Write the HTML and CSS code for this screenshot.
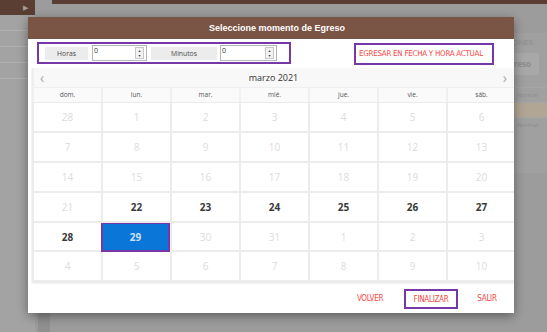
FILE: index.html
```html
<!DOCTYPE html>
<html lang="es">
<head>
  <meta charset="UTF-8">
  <title>Seleccione momento de Egreso</title>
  <link rel="stylesheet" href="styles.css">
</head>
<body>
  <!-- Background page (dimmed) -->
  <div class="page">
    <aside class="side">
      <div class="side-head">&#9654;</div>
      <div class="side-item"></div>
      <div class="side-item"></div>
      <div class="side-item"></div>
      <div class="side-item"></div>
    </aside>
    <div class="gutter"><span></span></div>
    <main class="main">
      <div class="main-bar"></div>
      <div class="main-body">
        <div class="panel">
          <div class="panel-title">OPCIONES</div>
          <div class="panel-btn">Egreso</div>
          <div class="panel-row">Normal</div>
          <div class="panel-row sel"></div>
          <div class="panel-row">Normal</div>
        </div>
      </div>
    </main>
  </div>

  <!-- Modal -->
  <div class="modal">
    <div class="modal-head">Seleccione momento de Egreso</div>

    <div class="toolbar">
      <div class="time-box">
        <span class="time-label">Horas</span>
        <div class="spin">
          <span class="spin-val">0</span>
          <span class="spin-btns"><i>&#9650;</i><i>&#9660;</i></span>
        </div>
        <span class="time-label wide">Minutos</span>
        <div class="spin">
          <span class="spin-val">0</span>
          <span class="spin-btns"><i>&#9650;</i><i>&#9660;</i></span>
        </div>
      </div>
      <div class="now-box">EGRESAR EN FECHA Y HORA ACTUAL</div>
    </div>

    <div class="calendar">
      <div class="cal-nav">
        <span class="cal-arrow">&#8249;</span>
        <span class="cal-month">marzo 2021</span>
        <span class="cal-arrow">&#8250;</span>
      </div>
      <div class="cal-days">
        <span>dom.</span><span>lun.</span><span>mar.</span><span>mié.</span><span>jue.</span><span>vie.</span><span>sáb.</span>
      </div>
      <div class="cal-grid">
        <span class="off">28</span><span class="off">1</span><span class="off">2</span><span class="off">3</span><span class="off">4</span><span class="off">5</span><span class="off">6</span>
        <span class="off">7</span><span class="off">8</span><span class="off">9</span><span class="off">10</span><span class="off">11</span><span class="off">12</span><span class="off">13</span>
        <span class="off">14</span><span class="off">15</span><span class="off">16</span><span class="off">17</span><span class="off">18</span><span class="off">19</span><span class="off">20</span>
        <span class="off">21</span><span>22</span><span>23</span><span>24</span><span>25</span><span>26</span><span>27</span>
        <span>28</span><span class="selected">29</span><span class="off">30</span><span class="off">31</span><span class="off">1</span><span class="off">2</span><span class="off">3</span>
        <span class="off">4</span><span class="off">5</span><span class="off">6</span><span class="off">7</span><span class="off">8</span><span class="off">9</span><span class="off">10</span>
      </div>
    </div>

    <div class="modal-foot">
      <span class="act">VOLVER</span>
      <span class="act boxed">FINALIZAR</span>
      <span class="act">SALIR</span>
    </div>
  </div>
</body>
</html>
```

FILE: styles.css
```css
/* General */
body {
  margin: 0;
  width: 547px;
  height: 332px;
  overflow: hidden;
  position: relative;
  background: #9c9c9c;
  font-family: 'Open Sans', 'Liberation Sans', sans-serif;
}

/* Dimmed background page */
.page {
  display: flex;
  height: 332px;
}

.side {
  width: 35px;
  background: #a3a3a3;
}

.side-head {
  height: 15px;
  background: #5a3e34;
  color: #a89c97;
  font-size: 7px;
  line-height: 15px;
  text-align: right;
  padding-right: 7px;
}

.side-item {
  height: 15px;
  border-bottom: 1px solid #b1b1b1;
}

.side-item:first-of-type {
  margin-top: 1px;
}

.gutter {
  width: 17px;
  display: flex;
  flex-direction: column;
  justify-content: flex-end;
}

.gutter span {
  height: 20px;
  margin: 0 2px 0 3px;
  background: #8f8f8f;
}

.main {
  flex: 1;
  display: flex;
  flex-direction: column;
}

.main-bar {
  height: 4px;
  background: #5a3e34;
}

.main-body {
  flex: 1;
  display: flex;
  justify-content: flex-end;
  padding-top: 29px;
}

.panel {
  width: 200px;
  height: 140px;
  background: #a0a0a0;
  color: #8c8c8c;
  font-size: 8px;
}

.panel-title {
  height: 17px;
  line-height: 17px;
  text-align: right;
  padding-right: 14px;
  font-size: 8px;
}

.panel-btn {
  margin: 3px 8px 0 auto;
  width: 70px;
  height: 22px;
  line-height: 22px;
  text-align: right;
  padding-right: 8px;
  background: #a8a8a8;
  font-weight: 700;
  box-sizing: border-box;
}

.panel-row {
  height: 14px;
  line-height: 14px;
  padding-left: 170px;
  font-size: 6px;
  border-top: 1px solid #a6a6a6;
}

.panel-row:nth-of-type(3) {
  margin-top: 12px;
}

.panel-row.sel {
  background: #b1a594;
}

/* Modal */
.modal {
  position: absolute;
  left: 28px;
  top: 17px;
  width: 486px;
  height: 296px;
  background: #fff;
  overflow: hidden;
  box-shadow: 0 3px 10px rgba(0, 0, 0, 0.4);
  display: flex;
  flex-direction: column;
}

.modal-head {
  height: 22px;
  line-height: 22px;
  background: #7a5444;
  color: #fff;
  font-size: 9px;
  font-weight: 700;
  text-align: center;
  padding-left: 12px;
  font-family: 'Liberation Sans', Arial, sans-serif;
}

.toolbar {
  height: 29px;
  display: flex;
  align-items: flex-start;
  padding-left: 9px;
  box-sizing: border-box;
}

.time-box {
  margin-top: 3px;
  width: 254px;
  height: 22px;
  border: 2px solid #7638a6;
  box-sizing: border-box;
  display: flex;
  align-items: center;
  padding-left: 6px;
  gap: 4px;
}

.time-label {
  width: 43px;
  height: 13px;
  line-height: 13px;
  background: #ececec;
  color: #4a4a4a;
  font-size: 6.8px;
  text-align: center;
}

.time-label.wide {
  width: 66px;
}

.spin {
  width: 55px;
  height: 16px;
  border: 1px solid #b5b5b5;
  box-sizing: border-box;
  display: flex;
  justify-content: space-between;
  background: #fff;
}

.time-label.wide + .spin {
  width: 57px;
  margin-left: -1px;
}

.spin-val {
  font-size: 7px;
  line-height: 10px;
  color: #333;
  padding-left: 1px;
}

.spin-btns {
  width: 7px;
  margin: 1px 2px 1px 0;
  border: 1px solid #c8c8c8;
  background: #f2f2f2;
  display: flex;
  flex-direction: column;
  justify-content: space-around;
  align-items: center;
}

.spin-btns i {
  font-style: normal;
  font-size: 3.5px;
  line-height: 4px;
  color: #444;
}

.now-box {
  margin: 4px 0 0 63px;
  width: 140px;
  height: 22px;
  border: 2px solid #7638a6;
  box-sizing: border-box;
  color: #f4473f;
  font-size: 7.9px;
  line-height: 17px;
  padding-left: 3px;
  font-family: 'DejaVu Sans Condensed', 'Liberation Sans', sans-serif;
  letter-spacing: -0.25px;
  white-space: nowrap;
}

/* Calendar */
.calendar {
  margin-left: 4px;
  width: 483px;
  box-shadow: 0 1px 2px rgba(0, 0, 0, 0.12);
}

.cal-nav {
  height: 19px;
  background: #f8f8f8;
  display: flex;
  align-items: center;
  justify-content: space-between;
  padding: 0 8px 0 6px;
  border-left: 2px solid #eeeeee;
}

.cal-arrow {
  color: #a8a8a8;
  font-size: 14px;
  line-height: 19px;
}

.cal-month {
  color: #333;
  font-size: 9px;
}

.cal-days {
  display: grid;
  grid-template-columns: repeat(7, 69px);
  height: 16px;
  background: #fafafa;
  border-top: 1px solid #efefef;
  border-bottom: 1px solid #ebebeb;
  box-sizing: border-box;
}

.cal-days span {
  font-size: 6.5px;
  line-height: 14px;
  color: #555;
  text-align: center;
  border-left: 2px solid #f0f0f0;
}

.cal-grid {
  display: grid;
  grid-template-columns: repeat(7, 69px);
  grid-template-rows: repeat(6, 29.9px);
}

.cal-grid span {
  border-left: 2px solid #ececec;
  border-bottom: 2px solid #ececec;
  display: flex;
  align-items: center;
  justify-content: center;
  font-size: 10px;
  font-weight: 700;
  color: #3a3a3a;
}

.cal-grid span.off {
  font-weight: 400;
  color: #dcdcdc;
}

.cal-grid span.selected {
  background: #0a76d8;
  color: #cfe2f6;
  border: 2px solid #7638a6;
  border-top-width: 1px;
}

/* Footer actions */
.modal-foot {
  flex: 1;
  display: flex;
  align-items: center;
  justify-content: flex-end;
  padding: 2px 0 0 0;
}

.act {
  color: #f4473f;
  font-size: 8px;
  font-family: 'DejaVu Sans Condensed', 'Liberation Sans', sans-serif;
  letter-spacing: -0.3px;
  width: 54px;
  text-align: center;
}

.act.boxed {
  margin: 0 2px 0 7px;
  height: 20px;
  line-height: 17px;
  border: 2px solid #7638a6;
  box-sizing: border-box;
}
```
